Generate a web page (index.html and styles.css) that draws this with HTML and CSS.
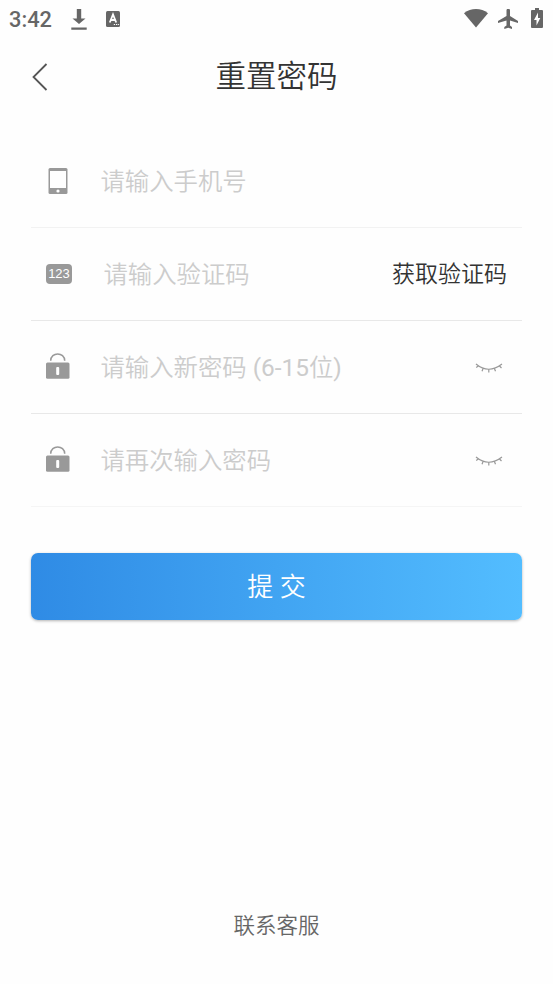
FILE: index.html
```html
<!DOCTYPE html>
<html lang="zh-CN">
<head>
<meta charset="utf-8">
<title>重置密码</title>
<link rel="stylesheet" href="styles.css">
</head>
<body>
<div class="screen">
  <div class="status">
    <span class="time">3:42</span>
    <svg class="download" width="16" height="22" viewBox="0 0 16 22"><path d="M5.800 0h4.400v9.500h4.300L8 15 1.500 9.500h4.300zM.3 18.500h15.400v2.300H.3z"/></svg>
    <svg class="keyboard" width="14" height="16" viewBox="0 0 14 16"><rect width="14" height="16" rx="1.500"/><path class="letter" d="M3.800 11.500 7 3.500l3.200 8M5 9h4"/><path class="dots" d="M7.800 13.500h1.300M10 13.500h1.300M12.100 13.500h1"/></svg>
    <span class="spacer"></span>
    <svg class="wifi" width="24" height="19" viewBox="0 0 24 19"><path d="M0 4.200C7-1.400 17-1.400 24 4.200L12 18.500z"/></svg>
    <svg class="plane" width="20" height="20" viewBox="0 0 20 20"><path d="M20 14v-2l-8-5V1.500a1.500 1.500 0 0 0-3.500 0V7L0 12v2l8.500-2.500v5l-2.200 1.600V20l3.900-1.200 3.800 1.200v-1.900L12 16.500v-5z"/></svg>
    <svg class="battery" width="12" height="20" viewBox="0 0 12 20"><path d="M4 0h4v2h3q1 0 1 1v16q0 1-1 1H1q-1 0-1-1V3q0-1 1-1h3z"/><path class="bolt" d="M7 4.500 3 12h2.500v5.500L9.300 10H7z"/></svg>
  </div>
  <header class="header">
    <svg class="back" width="16" height="28" viewBox="0 0 16 28"><path d="M14.500 1 1.500 14l13 13"/></svg>
    <h1>重置密码</h1>
  </header>
  <main class="form">
    <div class="row faint">
      <span class="icon"><svg width="20" height="26" viewBox="0 0 20 26"><rect width="19" height="26" x=".5" rx="1.500"/><path class="hole" d="M2 3h16v17H2z"/><circle class="hole" cx="10" cy="23" r="1.600"/></svg></span>
      <span class="hint">请输入手机号</span>
    </div>
    <div class="row code">
      <span class="icon"><span class="badge">123</span></span>
      <span class="hint">请输入验证码</span>
      <span class="get">获取验证码</span>
    </div>
    <div class="row">
      <span class="icon"><svg class="lock" width="24" height="26" viewBox="0 0 24 26"><path class="shackle" d="M4.700 7.800c0-9.200 14-9.200 14 0"/><rect y="9.500" width="23.500" height="16.300" rx="1.500"/><rect class="hole" x="10.200" y="14" width="3" height="8" rx="1"/></svg></span>
      <span class="hint">请输入新密码 <span class="latin">(6-15</span>位<span class="latin">)</span></span>
      <svg class="eye" width="28" height="12" viewBox="0 0 28 12"><path d="M1 2Q13.500 12.500 27 2M3.300 4 1.200 5.500M8 6.700 7 9.300M13.800 7.500v3M19.500 6.700l1 2.600M24.500 4l2 2"/></svg>
    </div>
    <div class="row last">
      <span class="icon"><svg class="lock" width="24" height="26" viewBox="0 0 24 26"><path class="shackle" d="M4.700 7.800c0-9.200 14-9.200 14 0"/><rect y="9.500" width="23.500" height="16.300" rx="1.500"/><rect class="hole" x="10.200" y="14" width="3" height="8" rx="1"/></svg></span>
      <span class="hint">请再次输入密码</span>
      <svg class="eye" width="28" height="12" viewBox="0 0 28 12"><path d="M1 2Q13.500 12.500 27 2M3.300 4 1.200 5.500M8 6.700 7 9.300M13.800 7.500v3M19.500 6.700l1 2.600M24.500 4l2 2"/></svg>
    </div>
  </main>
  <button class="submit">提 交</button>
  <footer class="service">联系客服</footer>
</div>
</body>
</html>
```
FILE: styles.css
```css
* { box-sizing: border-box; }
body {
  margin: 0;
  background: #fefefe;
  font-family: Roboto, "Noto Sans CJK SC", sans-serif;
  font-weight: 350;
}
svg { display: block; flex: none; }
.screen {
  height: 984px;
  display: flex;
  flex-direction: column;
  overflow: hidden;
}
.status {
  height: 38px;
  padding: 0 10px 0 9px;
  display: flex;
  align-items: center;
  color: #666;
  fill: #666;
}
.time {
  width: 62px;
  padding-top: 2px;
  font-size: 21.8px;
  font-weight: 500;
  line-height: 38px;
}
.download { margin-top: 1px; }
.keyboard { margin-left: 19px; margin-top: -1px; }
.letter { fill: none; stroke: #fff; stroke-width: 1.8; }
.dots { fill: none; stroke: #fff; stroke-width: 1.2; }
.spacer { flex: 1; }
.wifi { margin-top: -2px; }
.plane { margin-left: 10px; margin-top: -1px; }
.battery { margin-left: 13px; margin-top: -2px; }
.bolt { fill: #fff; }
.header {
  height: 77px;
  padding: 0 32px;
  display: grid;
  grid-template-columns: 16px 1fr 16px;
  align-items: center;
}
.back { fill: none; stroke: #555; stroke-width: 1.8; }
h1 {
  margin: 0;
  padding-top: 1px;
  color: #333;
  font-size: 30.5px;
  font-weight: 350;
  line-height: 44px;
  text-align: center;
}
.form { margin: 20px 31px 0; }
.row {
  height: 93px;
  display: flex;
  align-items: center;
  border-bottom: 1px solid #e8e8e8;
}
.faint { border-color: #f2f2f2; }
.last { border-color: #f5f5f5; }
.icon {
  width: 53px;
  margin-right: 16.400px;
  display: flex;
  justify-content: center;
  fill: #999;
}
.code .icon { width: 56px; }
.lock { margin-top: -2px; }
.hole { fill: #fefefe; }
.badge {
  width: 26px;
  height: 20px;
  border-radius: 4px;
  background: #999;
  color: #fff;
  font: 13px/20px "Liberation Sans", sans-serif;
  text-align: center;
}
.shackle { fill: none; stroke: #999; stroke-width: 1.5; }
.hint {
  flex: 1;
  padding-top: 2px;
  color: #ccc;
  font-size: 24.4px;
  line-height: 36px;
  white-space: nowrap;
}
.latin { font-weight: 400; }
.get {
  margin-right: 15px;
  padding-top: 2px;
  color: #333;
  font-size: 23px;
  line-height: 36px;
}
.eye { margin-right: 19px; margin-top: 1px; fill: none; stroke: #999; stroke-width: 1.2; }
.submit {
  height: 67.5px;
  margin: 45.5px 31px 0;
  padding: 1px 0 0;
  border: 0;
  border-radius: 7px;
  background: linear-gradient(90deg, #2f8be5, #53bdff);
  box-shadow: 0 1px 3px rgba(0, 0, 0, .3);
  color: #fff;
  font: 350 26px/38px Roboto, "Noto Sans CJK SC", sans-serif;
}
.service {
  margin: auto 0 42px;
  color: #666;
  font-size: 21.5px;
  line-height: 32px;
  text-align: center;
}
```
